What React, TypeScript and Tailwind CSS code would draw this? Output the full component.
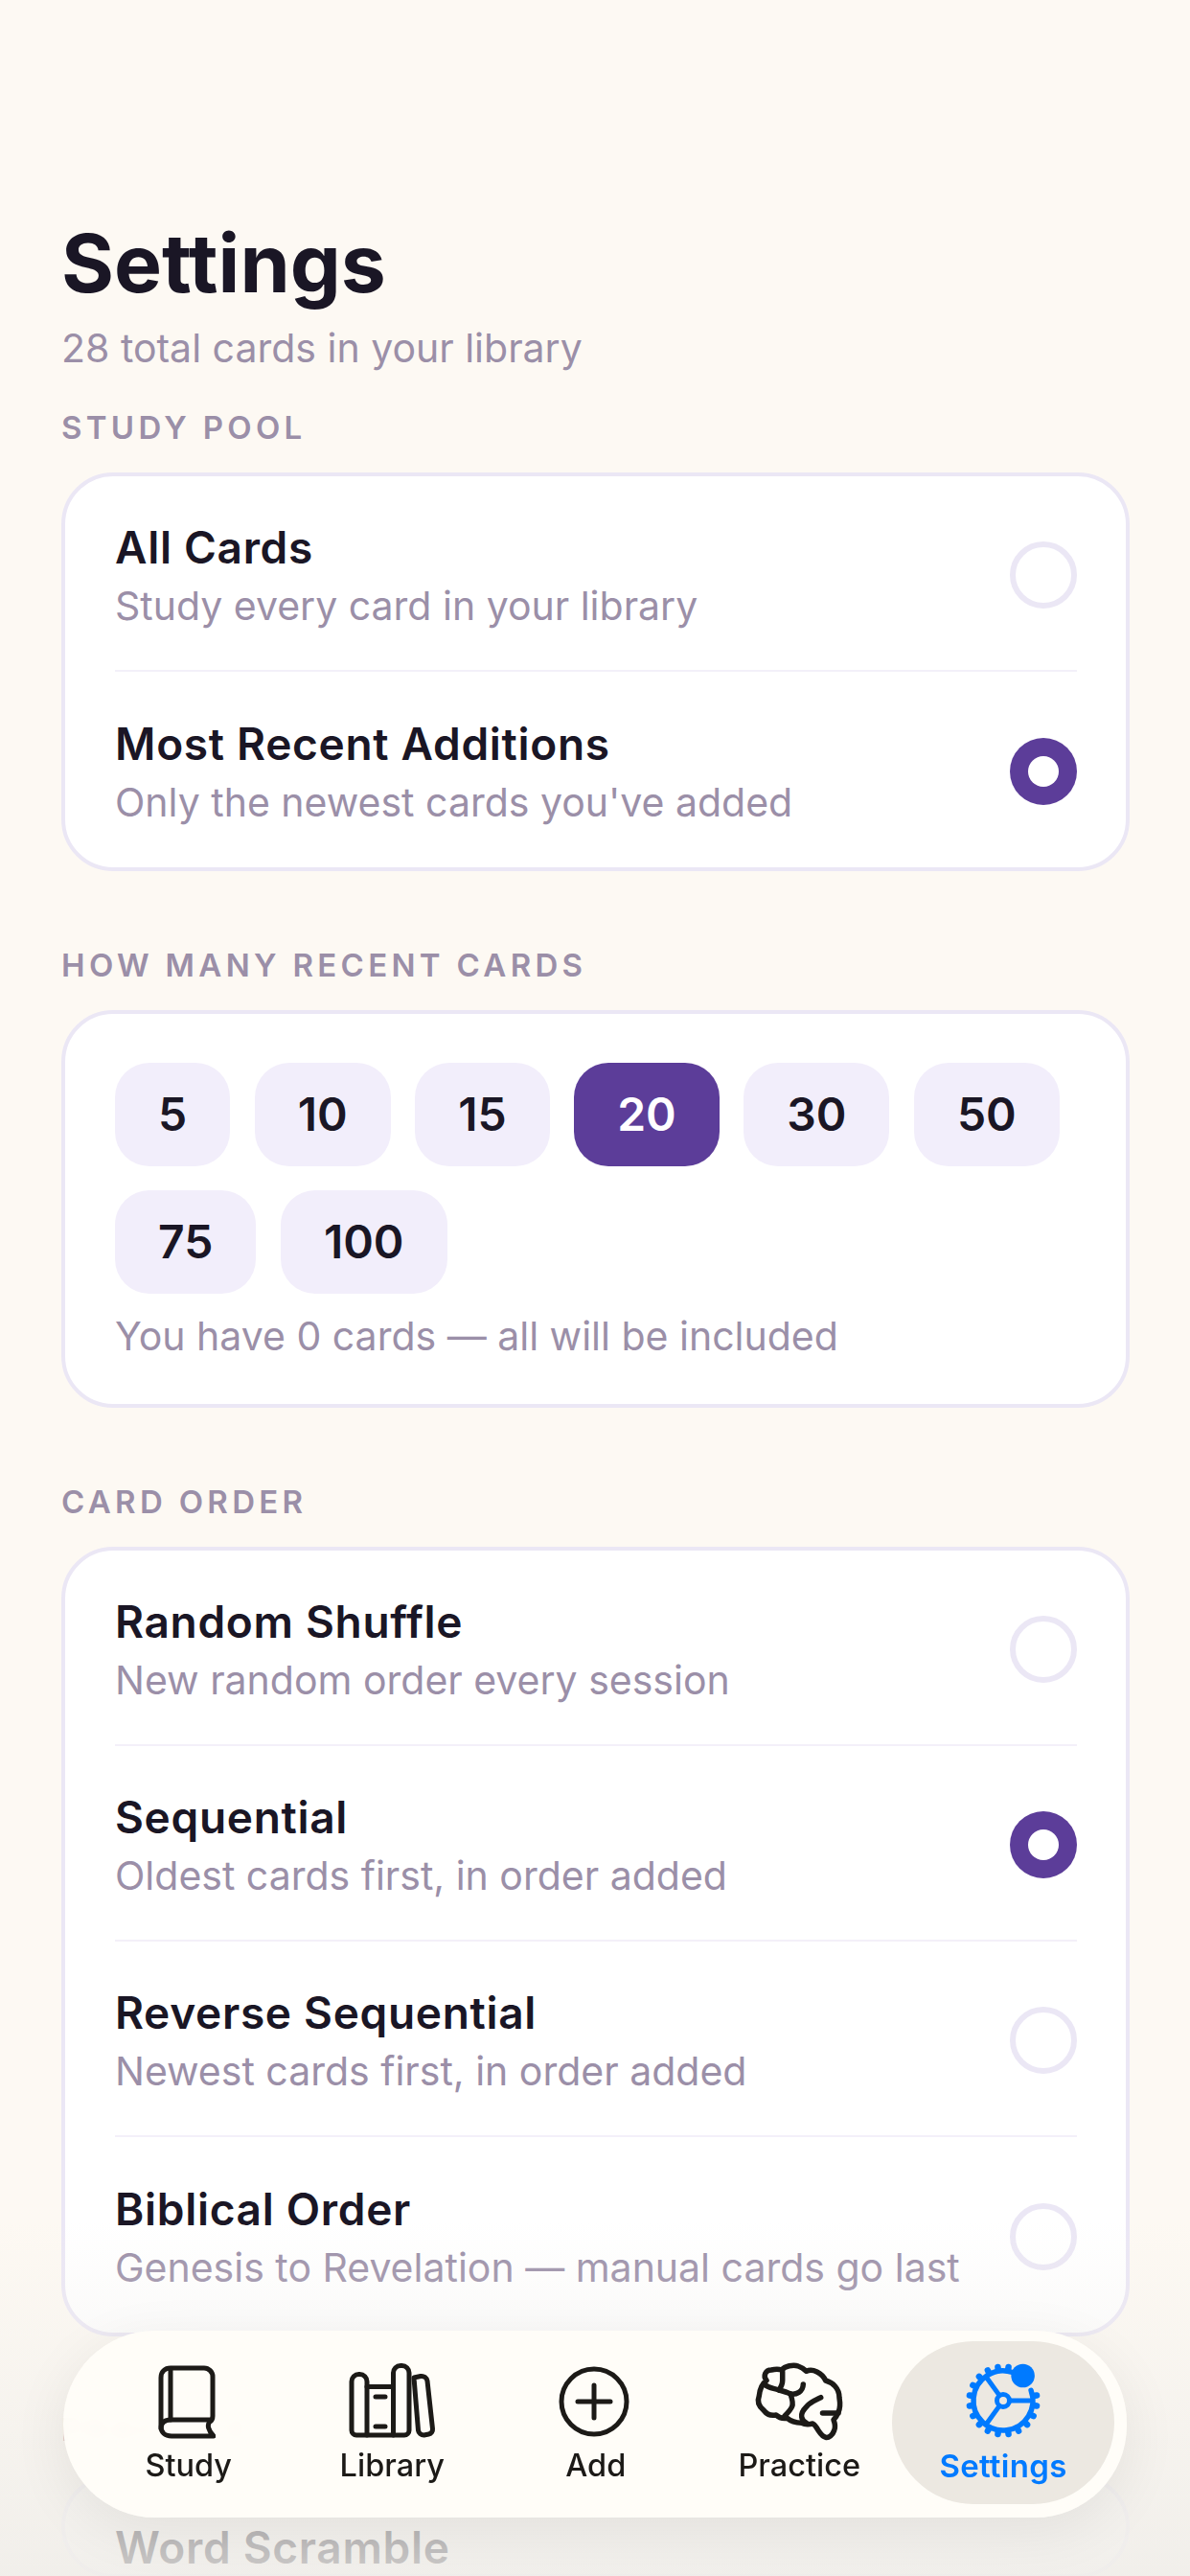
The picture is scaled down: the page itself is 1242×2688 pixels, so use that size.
const sans = "font-['Inter','Noto_Sans',sans-serif]"

function Radio({ selected }: { selected?: boolean }) {
  if (selected) {
    return (
      <div className="w-[70px] h-[70px] shrink-0 rounded-full bg-[#5c3d99] flex items-center justify-center">
        <div className="w-[32px] h-[32px] rounded-full bg-white" />
      </div>
    )
  }
  return <div className="w-[70px] h-[70px] shrink-0 rounded-full border-[6px] border-[#ebe7f5]" />
}

function OptionRow({ title, sub, selected, last }: { title: string; sub: string; selected?: boolean; last?: boolean }) {
  return (
    <div className={last ? 'h-[204px] pt-[4px] flex items-center justify-between' : 'h-[204px] pt-[4px] flex items-center justify-between border-b-2 border-[#f3f0f9]'}>
      <div>
        <div className="text-[46px] leading-[56px] font-semibold tracking-[0.7px] text-[#1a1625]">{title}</div>
        <div className="mt-[8px] text-[41px] leading-[50px] text-[#9b8fa8]">{sub}</div>
      </div>
      <Radio selected={selected} />
    </div>
  )
}

function SectionLabel({ children, className }: { children: string; className: string }) {
  return <div className={`text-[33px] leading-[40px] font-semibold tracking-[4.3px] text-[#9b8fa8] ${className}`}>{children}</div>
}

function Chip({ n, active }: { n: number; active?: boolean }) {
  return (
    <div className={active
      ? 'h-[108px] px-[45px] flex items-center justify-center rounded-[36px] bg-[#5c3d99] text-white text-[48px] font-semibold'
      : 'h-[108px] px-[45px] flex items-center justify-center rounded-[36px] bg-[#f2eefb] text-[#1a1625] text-[48px] font-semibold'}>
      {n}
    </div>
  )
}

function BookIcon() {
  return (
    <svg width="60" height="77" viewBox="0 0 60 77" fill="none" stroke="#1c1a17" strokeWidth="5" strokeLinecap="round" strokeLinejoin="round">
      <path d="M13 3H48a9 9 0 0 1 9 9V53c0 3-1 5-3 6-3 3-2 9 4 15H14C7 74 3 70 3 64V13C3 7 7 3 13 3Z" />
      <path d="M13 4V57" />
      <path d="M3 66c0-6 4-9 10-9H55" />
    </svg>
  )
}

function LibraryIcon() {
  return (
    <svg width="88" height="80" viewBox="0 0 88 80" fill="none" stroke="#1c1a17" strokeWidth="5" strokeLinecap="round" strokeLinejoin="round" className="overflow-visible">
      <path d="M3 19a7.5 7.5 0 0 1 7.5-7.5h1A7.5 7.5 0 0 1 19 19V75H8a5 5 0 0 1-5-5Z" />
      <path d="M19 24.5H46.5V75H19" />
      <path d="M28 35H38M28 66H38" />
      <path d="M46.5 10a7.5 7.5 0 0 1 7.5-7.5h1.5A7.5 7.5 0 0 1 63 10V70a5 5 0 0 1-5 5H46.5Z" />
      <path d="M68 15l7-1.5a6 6 0 0 1 7 5l5.5 50a5 5 0 0 1-4 5.5l-5 1a6 6 0 0 1-6-5Z" />
    </svg>
  )
}

function AddIcon() {
  return (
    <svg width="74" height="74" viewBox="0 0 74 74" fill="none" stroke="#1c1a17" strokeLinecap="round">
      <circle cx="37" cy="37" r="34" strokeWidth="5" />
      <path d="M37 20V54M20 37H54" strokeWidth="5" />
    </svg>
  )
}

function BrainIcon() {
  return (
    <svg width="94" height="80" viewBox="0 0 94 80" fill="none" stroke="#1c1a17" strokeWidth="5.5" strokeLinecap="round" strokeLinejoin="round" className="overflow-visible">
      <path d="M14 18C10 13 13 7 19 7C23 6 27 6 30 7C33 3 42 1 47 3C50 4 53 6 55.7 8.3C62 5 72 10 75.7 18C83 20 90 26 90 36C91 42 91 47 89 51C88 54 86 57 84 59C85.5 63 86 67 84.7 70C83 75 79 78 75.7 77.3C72 76.5 70 73 68 70C66 66 64 64 62.3 63C58 64 54 64 50.7 62.3C45 62 40 61 35.7 57.3C30 58 26 56 24 54C19 55 14 53 11 49C6 45 4 40 6.3 34C7 27 10 21 14 18Z" />
      <path d="M30.7 9V18C30.7 22 29 25 27 28" />
      <path d="M13 23C17 26 22 26 27 28C31 29 35 30 39 32" />
      <path d="M39 32C45 33 52 30 52.3 22" />
      <path d="M39 32C41 38 42 42 40.7 45C39 49 36 52 33 55" />
      <path d="M70.7 35.7C64 39 59 41 56 45C52 49 50 52 50.7 56C51 59 53 61 56 62.7" />
      <path d="M89 52H72.5" />
    </svg>
  )
}

function GearIcon() {
  const cx = 40
  const cy = 38
  const teeth = Array.from({ length: 20 }, (_, i) => i * 18 + 9).filter(a => a < 18 || a > 66)
  return (
    <svg width="80" height="78" viewBox="0 0 80 78" fill="none" stroke="#007aff" strokeLinecap="round" className="overflow-visible">
      <path d="M69.1 27.4A31 31 0 1 1 49.6 8.5" strokeWidth="5.5" />
      {teeth.map(a => (
        <line key={a} x1={cx} y1={cy - 32} x2={cx} y2={cy - 35.5} strokeWidth="6.5" transform={`rotate(${a} ${cx} ${cy})`} />
      ))}
      <circle cx={cx} cy={cy} r="6.5" strokeWidth="5" />
      <path d="M47 38H70M36 32.4L22 13M36 43.6L22 63" strokeWidth="5" />
      <circle cx="60.6" cy="12" r="12.3" fill="#007aff" stroke="none" />
    </svg>
  )
}

const tabs = [
  { label: 'Study', icon: <BookIcon /> },
  { label: 'Library', icon: <LibraryIcon /> },
  { label: 'Add', icon: <AddIcon /> },
  { label: 'Practice', icon: <BrainIcon /> },
]

export default function App() {
  return (
    <div className={`relative w-[1242px] h-[2688px] overflow-hidden bg-[#fdf9f3] ${sans}`}>
      <main className="pl-[64px] pr-[63px] pt-[224px]">
        <h1 className="text-[84px] leading-[102px] font-bold text-[#1a1625]">Settings</h1>
        <p className="mt-[12px] text-[41px] leading-[50px] text-[#9b8fa8]">28 total cards in your library</p>

        <SectionLabel className="mt-[38px] mb-[27px]">STUDY POOL</SectionLabel>
        <section className="border-[4px] border-[#ebe7f5] rounded-[54px] bg-white pl-[52px] pr-[51px]">
          <OptionRow title="All Cards" sub="Study every card in your library" />
          <OptionRow title="Most Recent Additions" sub="Only the newest cards you've added" selected last />
        </section>

        <SectionLabel className="mt-[78px] mb-[27px]">HOW MANY RECENT CARDS</SectionLabel>
        <section className="border-[4px] border-[#ebe7f5] rounded-[54px] bg-white pl-[52px] pr-[51px] pt-[51px] pb-[46px]">
          <div className="flex flex-wrap gap-x-[25.5px] gap-y-[25px]">
            <Chip n={5} />
            <Chip n={10} />
            <Chip n={15} />
            <Chip n={20} active />
            <Chip n={30} />
            <Chip n={50} />
            <Chip n={75} />
            <Chip n={100} />
          </div>
          <p className="mt-[19px] text-[41px] leading-[50px] text-[#9b8fa8]">You have 0 cards — all will be included</p>
        </section>

        <SectionLabel className="mt-[78px] mb-[27px]">CARD ORDER</SectionLabel>
        <section className="border-[4px] border-[#ebe7f5] rounded-[54px] bg-white pl-[52px] pr-[51px]">
          <OptionRow title="Random Shuffle" sub="New random order every session" />
          <OptionRow title="Sequential" sub="Oldest cards first, in order added" selected />
          <OptionRow title="Reverse Sequential" sub="Newest cards first, in order added" />
          <OptionRow title="Biblical Order" sub="Genesis to Revelation — manual cards go last" last />
        </section>

        <SectionLabel className="mt-[77px] mb-[27px]">PRACTICE</SectionLabel>
        <section className="border-[4px] border-[#ebe7f5]/60 rounded-[54px] bg-white/50 pl-[52px] pr-[51px] pt-[44px]">
          <div className="text-[46px] leading-[56px] font-semibold tracking-[0.7px] text-[#1a1625]">Word Scramble</div>
        </section>
      </main>

      {/* fade under the tab bar */}
      <div className="absolute inset-x-0 bottom-0 h-[370px] bg-gradient-to-b from-[#efede9]/0 to-[#efede9]/85" />

      <nav className="absolute left-[66px] bottom-[61px] w-[1110px] h-[195px] pl-[23px] pt-[11px] flex rounded-[96px] bg-[#fffdf8]/97 backdrop-blur-sm shadow-[0_14px_60px_rgba(0,0,0,0.07)]">
        {tabs.map(t => (
          <div key={t.label} className="w-[212.5px] h-[170px] pt-[23px] flex flex-col items-center">
            <div className="h-[80px] flex items-center justify-center">{t.icon}</div>
            <span className="mt-[8px] ml-[3px] text-[32.5px] leading-[38px] font-medium text-[#1c1a17]">{t.label}</span>
          </div>
        ))}
        <div className="w-[232px] h-[170px] -ml-[8px] pt-[23px] flex flex-col items-center rounded-[85px] bg-[#ece8e1]">
          <div className="h-[80px] flex items-center justify-center"><GearIcon /></div>
          <span className="mt-[8px] text-[33px] leading-[38px] font-semibold tracking-[0.3px] text-[#007aff]">Settings</span>
        </div>
      </nav>
    </div>
  )
}
